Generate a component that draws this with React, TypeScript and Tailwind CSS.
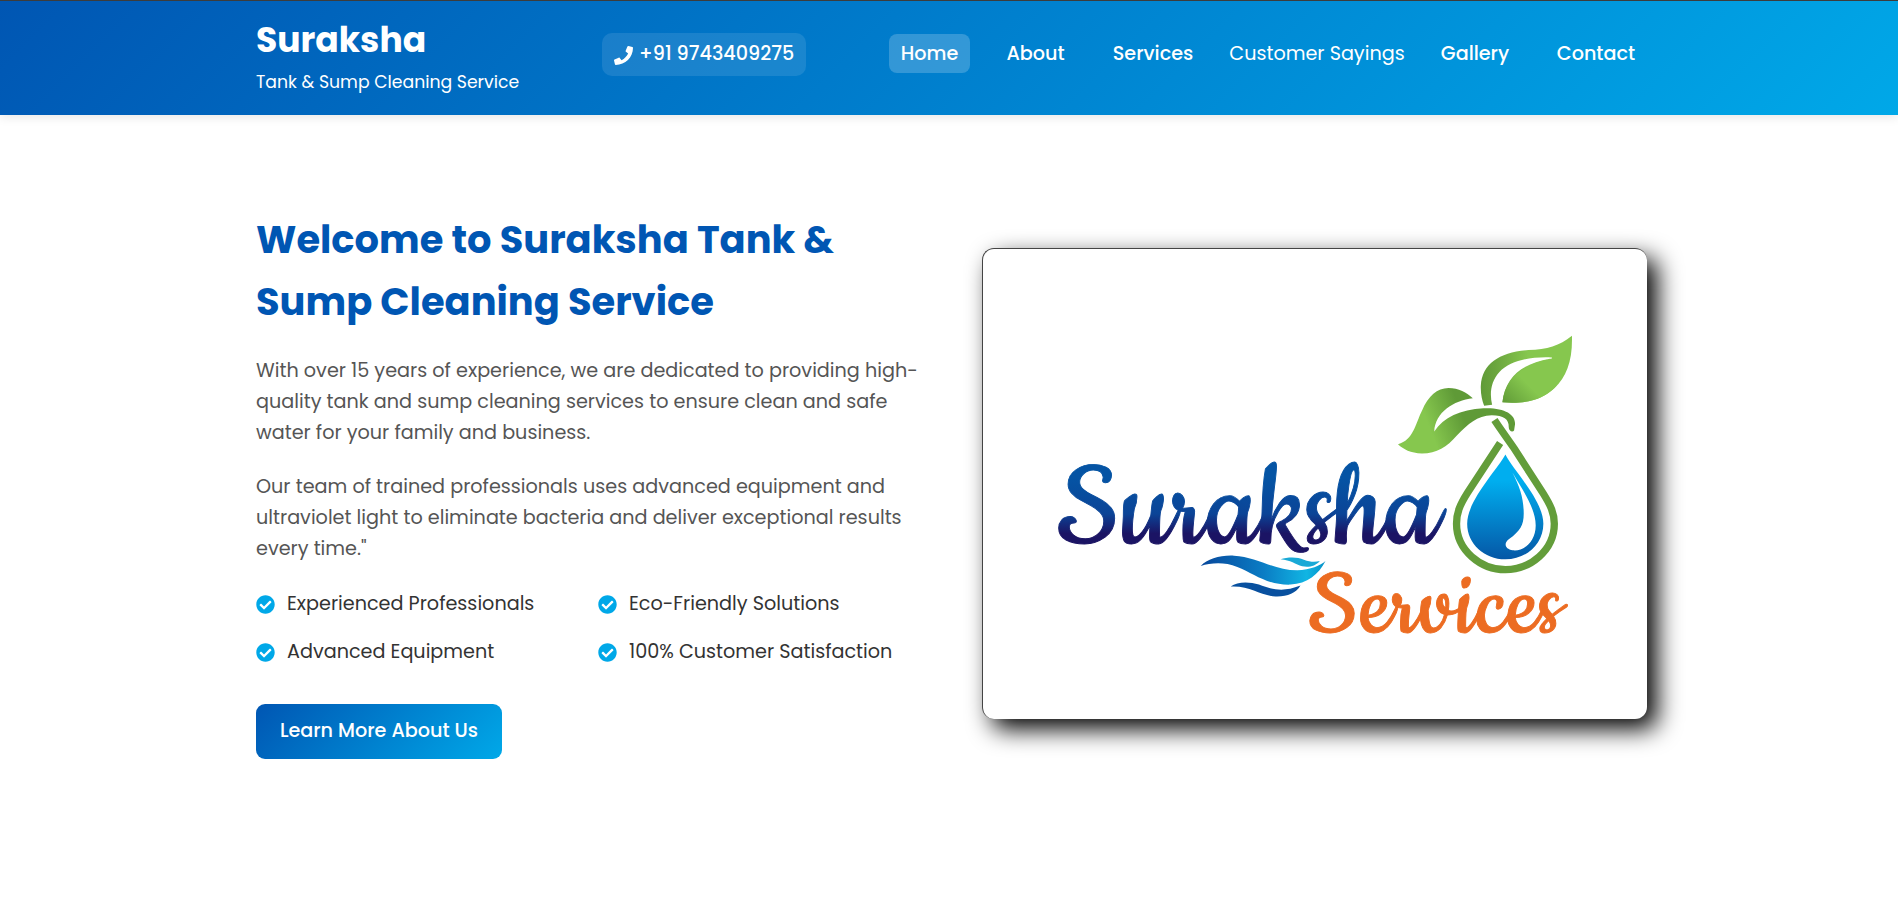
import { FaCheckCircle, FaPhone } from 'react-icons/fa';

const navItems = [
  { label: 'Home', cls: 'w-[81px] rounded-lg bg-white/20 font-medium' },
  { label: 'About', cls: 'w-[83px] rounded-lg font-medium' },
  { label: 'Services', cls: 'w-[104px] rounded-lg font-medium' },
  { label: 'Customer Sayings', cls: 'w-[176px] font-normal' },
  { label: 'Gallery', cls: 'w-[92px] rounded-lg font-medium' },
  { label: 'Contact', cls: 'w-[102px] rounded-lg font-medium' },
];

const introLines = [
  'With over 15 years of experience, we are dedicated to providing high-',
  'quality tank and sump cleaning services to ensure clean and safe',
  'water for your family and business.',
];

const teamLines = [
  'Our team of trained professionals uses advanced equipment and',
  'ultraviolet light to eliminate bacteria and deliver exceptional results',
  'every time."',
];

const features = [
  'Experienced Professionals',
  'Eco-Friendly Solutions',
  'Advanced Equipment',
  '100% Customer Satisfaction',
];

function Paragraph({ lines }: { lines: string[] }) {
  return (
    <p className="text-[19.2px] leading-[31px] text-[#555]">
      {lines.map((line) => (
        <span key={line} className="block whitespace-nowrap">
          {line}
        </span>
      ))}
    </p>
  );
}

function Header() {
  return (
    <header className="h-[115px] border-t border-[#3c3c3c] bg-[linear-gradient(135deg,#0056b3,#00a8e8)] pl-64 text-white shadow-[0_2px_10px_rgba(0,0,0,0.1)]">
      <div className="flex h-[105px] w-[1391px] items-center">
        <div className="flex w-[346px] flex-col whitespace-nowrap pt-0.5">
          <span className="text-[34.56px] leading-[55px] font-bold">Suraksha</span>
          <span className="text-[17.28px] leading-[28px]">Tank &amp; Sump Cleaning Service</span>
        </div>
        <a className="mt-px flex h-[43px] w-[204px] items-center gap-1.5 rounded-[10px] bg-white/10 pl-3 text-[19.2px] leading-none font-medium whitespace-nowrap">
          <FaPhone className="mt-0.5 size-[19px] shrink-0" />
          <span>+91 9743409275</span>
        </a>
        <nav className="ml-auto flex gap-6 text-[19.2px]">
          {navItems.map((n) => (
            <a key={n.label} className={`flex h-[39px] items-center justify-center pt-px whitespace-nowrap ${n.cls}`}>
              {n.label}
            </a>
          ))}
        </nav>
      </div>
    </header>
  );
}

function Logo() {
  return (
    <svg viewBox="982 248 665 471" className="h-full w-full">
      <defs>
        <linearGradient id="ink" x1="0" y1="460" x2="0" y2="546" gradientUnits="userSpaceOnUse">
          <stop offset="0.2" stopColor="#0554a4" />
          <stop offset="0.62" stopColor="#0b4497" />
          <stop offset="0.85" stopColor="#1b1464" />
        </linearGradient>
        <linearGradient id="drop" x1="0" y1="0" x2="0" y2="1">
          <stop offset="0.25" stopColor="#00aeef" />
          <stop offset="1" stopColor="#0557a6" />
        </linearGradient>
        <linearGradient id="leafTop" x1="360" y1="0" x2="600" y2="0" gradientUnits="userSpaceOnUse">
          <stop offset="0" stopColor="#5f9a37" />
          <stop offset="0.2" stopColor="#6ba63e" />
          <stop offset="0.6" stopColor="#86c74e" />
        </linearGradient>
        <linearGradient id="leafInner" x1="425" y1="275" x2="520" y2="180" gradientUnits="userSpaceOnUse">
          <stop offset="0" stopColor="#5f9a37" />
          <stop offset="0.7" stopColor="#86c74e" />
        </linearGradient>
        <linearGradient id="leafLow" x1="180" y1="360" x2="360" y2="290" gradientUnits="userSpaceOnUse">
          <stop offset="0.15" stopColor="#86c74e" />
          <stop offset="0.7" stopColor="#5f9a37" />
        </linearGradient>
        <linearGradient id="wave" x1="0" y1="0" x2="1" y2="0">
          <stop offset="0" stopColor="#07479b" />
          <stop offset="0.5" stopColor="#0a7cc4" />
          <stop offset="0.85" stopColor="#11b5e3" />
          <stop offset="1" stopColor="#0791c8" />
        </linearGradient>
      </defs>

      <g transform="translate(1360 310) scale(.33333)">
        <path fill="url(#leafTop)" d="M636 75C598 105 562 117 505 118C420 124 366 158 362 225C361 250 366 270 372 285L396 282C388 250 392 212 418 184C450 150 510 137 575 140C578 141 576 144 570 144C490 158 436 195 427 275C500 280 545 268 583 233C620 198 638 150 636 75Z" />
        <path fill="url(#leafInner)" d="M427 275C434 205 485 165 560 147L590 225C548 268 500 280 427 275Z" />
        <path fill="url(#leafLow)" d="M113 401C160 387 165 340 185 300C205 255 230 233 265 232C295 232 320 245 338 263C280 270 225 305 222 363C250 320 300 297 370 293C430 290 466 310 465 340L462 360C456 367 446 360 446 350C447 325 430 315 395 314C350 315 325 340 290 375C260 410 230 429 185 429C150 427 130 417 113 401Z" />
        <path fill="none" stroke="#639d3a" strokeWidth="22" d="M420 397L322 547C298 585 289 608 289 640C289 720 362 778 436 778C510 778 583 720 583 640C583 608 572 585 549 548L462 413C438 378 422 357 403 328" />
        <path fill="url(#drop)" d="M436 432C460 480 550 570 550 640C550 700 500 747 436 747C372 747 321 700 321 640C321 570 410 480 436 432Z" />
        <path fill="#fff" d="M457 486C485 535 527 592 527 645C527 695 490 724 458 720C434 716 430 698 447 686C480 662 491 645 491 610C491 565 480 530 457 486Z" />
      </g>

      <g transform="translate(1040 440) scale(.33333)">
        <path fill="url(#wave)" d="M480 377C500 355 540 344 580 346C650 350 700 390 770 390C810 389 840 375 855 362C835 402 800 430 750 433C680 435 640 400 590 380C550 364 510 368 480 377Z" />
        <path fill="#19a9d6" d="M720 357C740 350 770 349 790 358C810 366 825 365 838 362C825 378 805 382 785 378C765 373 750 359 720 357Z" />
        <path fill="#08509f" d="M570 439C590 424 625 424 655 433C690 446 725 458 780 436C765 460 740 470 705 469C655 465 630 436 570 439Z" />
      </g>

      <g className="font-['Cookie','Liberation_Serif',cursive]" strokeWidth="0.9" strokeLinejoin="round">
        <text x="1056" y="542.5" fontSize="134" fill="url(#ink)" stroke="url(#ink)" textLength="382" lengthAdjust="spacingAndGlyphs">
          Suraksha
        </text>
        <text x="1308" y="632" fontSize="105" fill="#ec6c22" stroke="#ec6c22" textLength="254" lengthAdjust="spacingAndGlyphs">
          Services
        </text>
      </g>
    </svg>
  );
}

export default function App() {
  return (
    <div className="h-[921px] overflow-hidden bg-white font-['Poppins','Inter',sans-serif]">
      <Header />
      <main className="flex items-start gap-[61px] pl-64">
        <section className="w-[665px] pt-[93.5px]">
          <h1 className="text-[38.4px] leading-[62px] font-bold whitespace-nowrap text-[#0056b3]">
            <span className="block">Welcome to Suraksha Tank &amp;</span>
            <span className="block">Sump Cleaning Service</span>
          </h1>
          <div className="mt-[22.5px] flex flex-col gap-[23px]">
            <Paragraph lines={introLines} />
            <Paragraph lines={teamLines} />
          </div>
          <ul className="mt-6 grid grid-cols-[342px_323px] gap-y-[17px] text-[19.2px] leading-[31px] text-[#333]">
            {features.map((f) => (
              <li key={f} className="flex items-center gap-3 whitespace-nowrap">
                <FaCheckCircle className="mt-px size-[19px] shrink-0 text-[#00a8e8]" />
                <span>{f}</span>
              </li>
            ))}
          </ul>
          <a className="mt-[37px] flex h-[55px] w-[246px] items-center justify-center rounded-[9px] bg-[linear-gradient(135deg,#0056b3,#00a8e8)] text-[19.2px] font-medium whitespace-nowrap text-white">
            Learn More About Us
          </a>
        </section>
        <figure className="mt-[133px] h-[471px] w-[665px] rounded-xl border-t border-l border-[#444] bg-white shadow-[10px_10px_25px_#000]">
          <Logo />
        </figure>
      </main>
    </div>
  );
}
